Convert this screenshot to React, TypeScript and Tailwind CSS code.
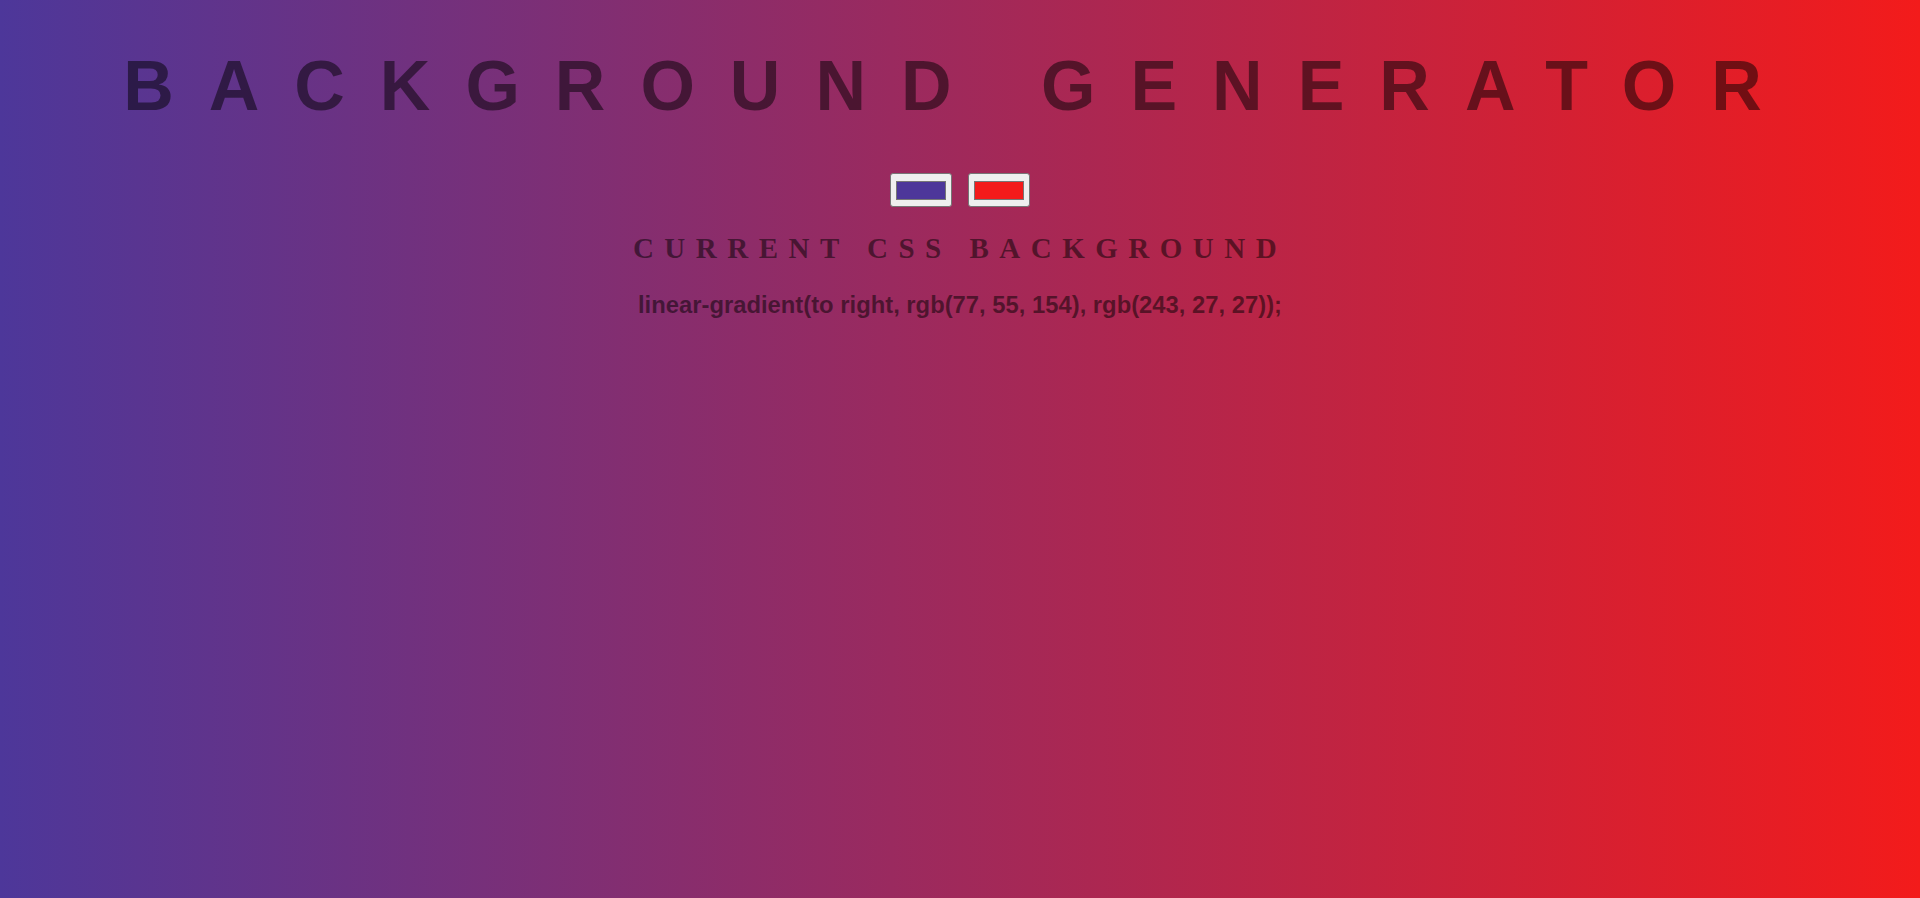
import React, { useState } from 'react';

const toRgb = (hex: string) => {
    const n = parseInt(hex.slice(1), 16);
    return `rgb(${(n >> 16) & 255}, ${(n >> 8) & 255}, ${n & 255})`;
};

const Swatch: React.FC<{ value: string; onChange: (v: string) => void }> = ({ value, onChange }) => (
    <label className="relative flex items-center justify-center w-[62px] h-[34px] bg-[#efefef] border border-[#767676] rounded-[3px] cursor-pointer">
        <span className="block w-[50px] h-[19px] border border-[#777777]" style={{ backgroundColor: value }} />
        <input
            type="color"
            value={value}
            onChange={(e) => onChange(e.target.value)}
            className="absolute inset-0 opacity-0 cursor-pointer"
        />
    </label>
);

const App: React.FC = () => {
    const [color1, setColor1] = useState('#4d379a');
    const [color2, setColor2] = useState('#f31b1b');

    const css = `linear-gradient(to right, ${toRgb(color1)}, ${toRgb(color2)})`;

    return (
        <div className="min-h-screen w-full flex flex-col items-center text-center text-black/50" style={{ background: css }}>
            <h1 className="mt-[51px] w-full text-[70px] leading-[70px] font-bold tracking-[0.5em] uppercase font-['Liberation_Sans',Arial,sans-serif]">
                Background Generator
            </h1>

            <div className="mt-[52px] flex items-center gap-4">
                <Swatch value={color1} onChange={setColor1} />
                <Swatch value={color2} onChange={setColor2} />
            </div>

            <h3 className="mt-[27px] w-full text-[29px] leading-[29px] font-bold tracking-[10.5px] uppercase font-['Liberation_Serif','Times_New_Roman',serif]">
                Current CSS Background
            </h3>

            <p className="mt-[30px] text-[23.8px] leading-[24px] font-bold font-['Liberation_Sans',Arial,sans-serif]">
                {css};
            </p>
        </div>
    );
};

export default App;
